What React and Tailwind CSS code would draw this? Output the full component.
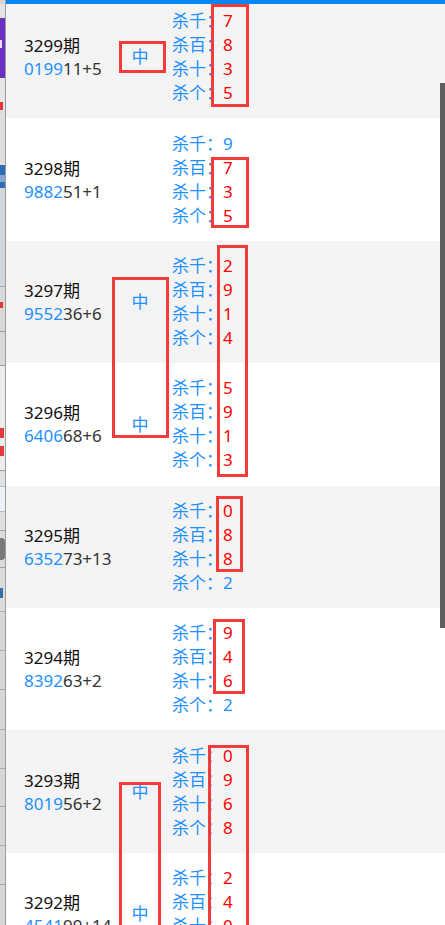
import React from 'react';

const BLUE = 'text-[#1e90ff]';

const rows = [
  { q: '3299', a: '0199', b: '11+5', zhong: true, k: [['7', 1], ['8', 1], ['3', 1], ['5', 1]] },
  { q: '3298', a: '9882', b: '51+1', zhong: false, k: [['9', 0], ['7', 1], ['3', 1], ['5', 1]] },
  { q: '3297', a: '9552', b: '36+6', zhong: true, k: [['2', 1], ['9', 1], ['1', 1], ['4', 1]] },
  { q: '3296', a: '6406', b: '68+6', zhong: true, k: [['5', 1], ['9', 1], ['1', 1], ['3', 1]] },
  { q: '3295', a: '6352', b: '73+13', zhong: false, k: [['0', 1], ['8', 1], ['8', 1], ['2', 0]] },
  { q: '3294', a: '8392', b: '63+2', zhong: false, k: [['9', 1], ['4', 1], ['6', 1], ['2', 0]] },
  { q: '3293', a: '8019', b: '56+2', zhong: true, k: [['0', 1], ['9', 1], ['6', 1], ['8', 1]] },
  { q: '3292', a: '4541', b: '99+14', zhong: true, k: [['2', 1], ['4', 1], ['0', 1], ['1', 1]] },
];

const labels = ['杀千', '杀百', '杀十', '杀个'];

const boxes = [
  'left-[119px] top-[41px] w-[47px] h-[32px]',
  'left-[211px] top-[4px] w-[38px] h-[103px]',
  'left-[211px] top-[157px] w-[38px] h-[71px]',
  'left-[112px] top-[277px] w-[57px] h-[161px]',
  'left-[217px] top-[245px] w-[31px] h-[232px]',
  'left-[216px] top-[496px] w-[27px] h-[76px]',
  'left-[213px] top-[619px] w-[32px] h-[75px]',
  'left-[119px] top-[782px] w-[42px] h-[170px]',
  'left-[208px] top-[745px] w-[41px] h-[200px]',
];

const strip = [
  'h-[4px] bg-[#d6d6d6]',
  'h-[14px] bg-[#e4e4e4]',
  'h-[22px] bg-[#6c2fc4]',
  'h-[8px] bg-[#6c2fc4] border-l-2 border-[#e8e0f4]',
  'h-[30px] bg-[#6c2fc4]',
  'h-[24px] bg-[#e6e6e6]',
  'h-[8px] bg-[#e6e6e6] border-l-[3px] border-[#e23a3a]',
  'h-[55px] bg-[#dedede]',
  'h-[10px] bg-[#2f6cb4]',
  'h-[7px] bg-[#86a6cf]',
  'h-[6px] bg-[#2f6cb4]',
  'h-[98px] bg-[#d2d7dd]',
  'h-[1px] bg-[#a8b0b8]',
  'h-[15px] bg-[#d8d8d8]',
  'h-[6px] bg-[#d8d8d8] border-l-[3px] border-[#e23a3a]',
  'h-[23px] bg-[#d8d8d8]',
  'h-[1px] bg-[#9a9a9a]',
  'h-[33px] bg-[#dadada]',
  'h-[1px] bg-[#a0a0a0]',
  'h-[62px] bg-[#ececec]',
  'h-[10px] bg-[#ececec] border-l-[4px] border-[#e23a3a]',
  'h-[8px] bg-[#ececec]',
  'h-[10px] bg-[#ececec] border-l-[4px] border-[#e23a3a]',
  'h-[14px] bg-[#ececec]',
  'h-[1px] bg-[#a0a0a0]',
  'h-[15px] bg-[#e0e0e0]',
  'h-[26px] bg-[#eef2f6] border-y border-[#a9bfd4]',
  'h-[18px] bg-[#e0e0e0]',
  'h-[1px] bg-[#a0a0a0]',
  'h-[7px] bg-[#dcdcdc]',
  'h-[22px] bg-[#7a7a7a] rounded-r-[3px]',
  'h-[7px] bg-[#dcdcdc]',
  'h-[1px] bg-[#a0a0a0]',
  'h-[20px] bg-[#dcdcdc]',
  'h-[10px] bg-[#dcdcdc] border-l-[3px] border-[#3a6ea8]',
  'h-[13px] bg-[#dcdcdc]',
  'h-[1px] bg-[#9fb0c0]',
  'h-[38px] bg-[#d6d6d6]',
  'h-[1px] bg-[#9fb0c0]',
  'h-[38px] bg-[#d6d6d6]',
  'h-[1px] bg-[#9fb0c0]',
  'h-[39px] bg-[#d6d6d6]',
  'h-[1px] bg-[#9fb0c0]',
  'h-[38px] bg-[#d6d6d6]',
  'h-[1px] bg-[#9fb0c0]',
  'h-[37px] bg-[#d6d6d6]',
  'h-[1px] bg-[#9fb0c0]',
  'h-[38px] bg-[#d6d6d6]',
  'h-[1px] bg-[#9fb0c0]',
  'h-[38px] bg-[#d6d6d6]',
  'h-[1px] bg-[#9fb0c0]',
  'h-[40px] bg-[#d6d6d6]',
];

function Row({ r, i }) {
  return (
    <div className={`flex items-center h-[122.4px] shrink-0 pl-[18px] ${i % 2 === 0 ? 'bg-[#f4f4f4]' : 'bg-white'}`}>
      <div className="w-[96px] flex flex-col text-[17px] leading-[23px]">
        <div className="text-[#111]">{r.q}期</div>
        <div>
          <span className={BLUE}>{r.a}</span>
          <span className="text-[#333]">{r.b}</span>
        </div>
      </div>
      <div className={`w-[40px] text-center text-[17px] ${BLUE}`}>{r.zhong ? '中' : ''}</div>
      <div className="ml-[12px] flex flex-col text-[17px] leading-[24px]">
        {r.k.map(([d, red], j) => (
          <div key={j} className="flex">
            <span className={BLUE}>{labels[j]}：</span>
            <span className={red ? 'text-[#ff0000]' : BLUE}>{d}</span>
          </div>
        ))}
      </div>
    </div>
  );
}

export default function App() {
  return (
    <div className="relative w-[445px] h-[925px] overflow-hidden flex bg-white [font-family:'Noto_Sans','Noto_Sans_CJK_SC',sans-serif]">
      <div className="w-[6px] shrink-0 flex flex-col border-r border-[#9c9c9c] overflow-hidden">
        {strip.map((c, i) => (
          <div key={i} className={`shrink-0 ${c}`} />
        ))}
      </div>
      <div className="relative flex-1 overflow-hidden">
        <div className="-mt-1 flex flex-col">
          {rows.map((r, i) => (
            <Row key={i} r={r} i={i} />
          ))}
        </div>
        <div className="absolute top-0 left-0 right-0 h-[4px] bg-[#0a86f2]" />
        <div className="absolute right-0 top-[83px] w-[5px] h-[545px] bg-[#5f5f5f]" />
      </div>
      {boxes.map((b, i) => (
        <div key={i} className={`absolute border-[3px] border-[#f43a3a] ${b}`} />
      ))}
    </div>
  );
}
